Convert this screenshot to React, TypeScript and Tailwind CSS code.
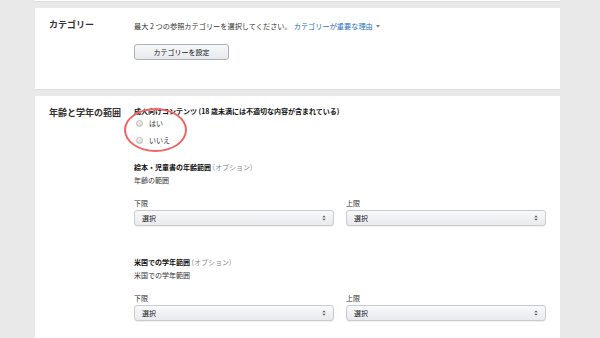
import React from 'react';

const font = { fontFamily: '"Noto Sans CJK JP", "Noto Sans", sans-serif' };

const SelectBox = () => (
    <div className="h-[16px] w-[200px] rounded-[3px] border border-[#c9cbcf] bg-gradient-to-b from-[#f8f9fa] to-[#e8eaed] shadow-[0_1px_0_rgba(0,0,0,0.06)] flex items-center pl-[7px] pr-[7px]">
        <span className="text-[7px] leading-[12px] text-[#222]">選択</span>
        <svg className="ml-auto" width="4" height="6" viewBox="0 0 4 6">
            <path d="M0.3 2.3 L2 0.6 L3.7 2.3 Z" fill="#555" />
            <path d="M0.3 3.7 L2 5.4 L3.7 3.7 Z" fill="#555" />
        </svg>
    </div>
);

const Radio = ({ label }: { label: string }) => (
    <div className="flex items-center h-[12px] pl-[2px] gap-[6px]">
        <span className="w-[7px] h-[7px] rounded-full border border-[#b9b9b9] bg-gradient-to-b from-[#f4f4f4] to-[#d9d9d9]" />
        <span className="text-[7px] leading-[12px] text-[#333]">{label}</span>
    </div>
);

const RangeBlock = ({ title, sub, top }: { title: string; sub: string; top: string }) => (
    <div className={top}>
        <p className="text-[7px] leading-[12px] text-[#111]">
            <span className="font-bold">{title}</span>
            <span className="text-[#888]"> (オプション)</span>
        </p>
        <p className="text-[7px] leading-[12px] text-[#333] mt-[1px]">{sub}</p>
        <div className="grid grid-cols-[200px_200px] gap-x-[12px] mt-[11px]">
            <p className="text-[7px] leading-[12px] text-[#333]">下限</p>
            <p className="text-[7px] leading-[12px] text-[#333]">上限</p>
            <div className="mt-[1px]"><SelectBox /></div>
            <div className="mt-[1px]"><SelectBox /></div>
        </div>
    </div>
);

export default function App() {
    return (
        <div className="w-[600px] h-[338px] overflow-hidden bg-[#e9e9e9]" style={font}>
            <div className="w-[525px] ml-[35px]">
                <div className="h-[2px] bg-white border-b border-[#dcdcdc]" />

                {/* Category */}
                <div className="mt-[6px] h-[82px] bg-white border-b border-[#dcdcdc] flex pl-[14px] pt-[10px]">
                    <div className="w-[85px] pt-[1px] text-[9px] leading-[12px] font-bold text-[#333]">カテゴリー</div>
                    <div className="mt-[2px]">
                        <p className="text-[7.2px] leading-[12px] text-[#333] flex items-center">
                            <span>最大 2 つの参照カテゴリーを選択してください。</span>
                            <span className="text-[#2a6ebb] ml-[2px]">カテゴリーが重要な理由</span>
                            <svg className="ml-[3px]" width="4" height="3" viewBox="0 0 4 3">
                                <path d="M0 0 L4 0 L2 2.5 Z" fill="#777" />
                            </svg>
                        </p>
                        <button className="mt-[12px] h-[16px] w-[95px] rounded-[3px] border border-[#adb1b8] bg-gradient-to-b from-[#f7f8fa] to-[#e7e9ec] text-[7px] leading-[12px] text-[#111]">
                            カテゴリーを設定
                        </button>
                    </div>
                </div>

                {/* Age and grade range */}
                <div className="relative mt-[6px] h-[300px] bg-white flex pl-[14px]">
                    <div className="w-[85px] pt-[11px] text-[9px] leading-[12px] font-bold text-[#333]">年齢と学年の範囲</div>
                    <div className="pt-[9px]">
                        <p className="text-[7px] leading-[12px] font-bold text-[#111]">成人向けコンテンツ (18 歳未満には不適切な内容が含まれている)</p>
                        <Radio label="はい" />
                        <div className="mt-[5px]"><Radio label="いいえ" /></div>
                        <RangeBlock title="絵本・児童書の年齢範囲" sub="年齢の範囲" top="mt-[15px]" />
                        <RangeBlock title="米国での学年範囲" sub="米国での学年範囲" top="mt-[30px]" />
                    </div>
                    <div className="absolute left-[89px] top-[12px] w-[63px] h-[44px] rounded-[50%] border-[2.5px] border-[#f06462]" />
                </div>
            </div>
        </div>
    );
}
